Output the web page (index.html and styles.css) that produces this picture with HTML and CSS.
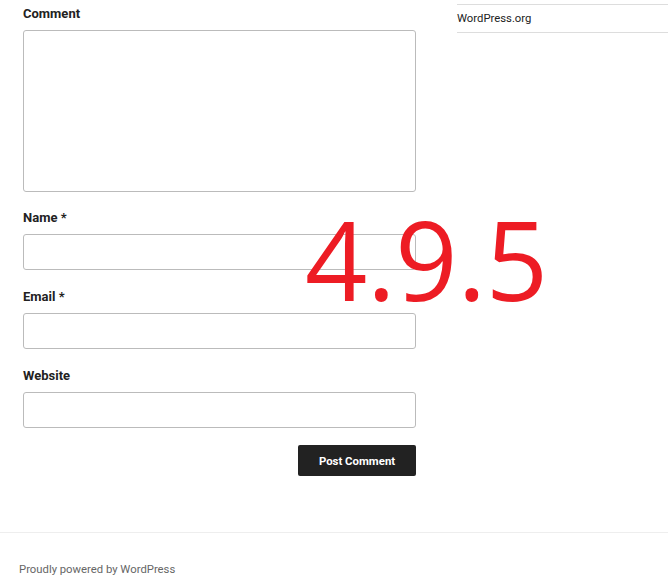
FILE: index.html
```html
<!DOCTYPE html>
<html>
<head>
<meta charset="utf-8">
<link rel="stylesheet" href="styles.css">
</head>
<body>
<div class="page">
  <div class="content">
    <main class="primary">
      <form class="comment-form">
        <div class="field first">
          <label class="label">Comment</label>
          <textarea class="textarea"></textarea>
        </div>
        <div class="field">
          <label class="label">Name *</label>
          <input class="input" type="text">
        </div>
        <div class="field">
          <label class="label">Email *</label>
          <input class="input" type="text">
        </div>
        <div class="field">
          <label class="label">Website</label>
          <input class="input" type="text">
        </div>
        <div class="actions">
          <button class="submit" type="button">Post Comment</button>
        </div>
      </form>
    </main>
    <aside class="sidebar">
      <ul class="links">
        <li class="link-item">WordPress.org</li>
      </ul>
    </aside>
  </div>
  <footer class="footer">
    <p class="credit">Proudly powered by WordPress</p>
  </footer>
  <div class="version">4.9.5</div>
</div>
</body>
</html>
```
FILE: styles.css
```css
* { box-sizing: border-box; }
html, body { margin: 0; padding: 0; background: #fff; }
body {
  font-family: Roboto, "Liberation Sans", Arial, sans-serif;
  color: #333;
  width: 668px;
  height: 580px;
  overflow: hidden;
}
.page { position: relative; height: 580px; }
.content {
  display: flex;
  padding-left: 23px;
  height: 532px;
}
.primary { width: 393px; flex: none; }
.field { display: flex; flex-direction: column; margin-bottom: 16px; }
.field.first { margin-bottom: 15px; }
.label {
  font-size: 13px;
  font-weight: 700;
  line-height: 21px;
  height: 21px;
  color: #222;
  margin-bottom: 6px;
}
.first .label { margin-top: 3px; }
.textarea {
  display: block;
  width: 393px;
  height: 162px;
  border: 1px solid #bbb;
  border-radius: 3px;
  resize: none;
  margin: 0;
  padding: 0;
}
.input {
  display: block;
  width: 393px;
  height: 36px;
  border: 1px solid #bbb;
  border-radius: 3px;
  margin: 0;
  padding: 0;
}
.actions { display: flex; justify-content: flex-end; margin-top: 17px; }
.submit {
  width: 118px;
  height: 31px;
  background: #222;
  color: #fff;
  border: none;
  border-radius: 2px;
  font-family: Roboto, "Liberation Sans", Arial, sans-serif;
  font-size: 11.4px;
  font-weight: 700;
  padding: 0;
}
.sidebar { margin-left: 41px; flex: 1; padding-top: 4px; }
.links { list-style: none; margin: 0; padding: 0; }
.link-item {
  border-top: 1px solid #ddd;
  border-bottom: 1px solid #ddd;
  height: 29px;
  line-height: 28px;
  font-size: 11.3px;
  color: #222;
}
.footer {
  border-top: 1px solid #eee;
  padding-left: 19px;
}
.credit {
  margin: 0;
  padding-top: 30px;
  font-size: 11.3px;
  line-height: 14px;
  color: #666;
}
.version {
  position: absolute;
  left: 305px;
  top: 204px;
  font-family: "Open Sans", "Noto Sans", sans-serif;
  font-size: 109px;
  font-weight: 500;
  line-height: 109px;
  color: #ed1c24;
  letter-spacing: -0.3px;
}
```
